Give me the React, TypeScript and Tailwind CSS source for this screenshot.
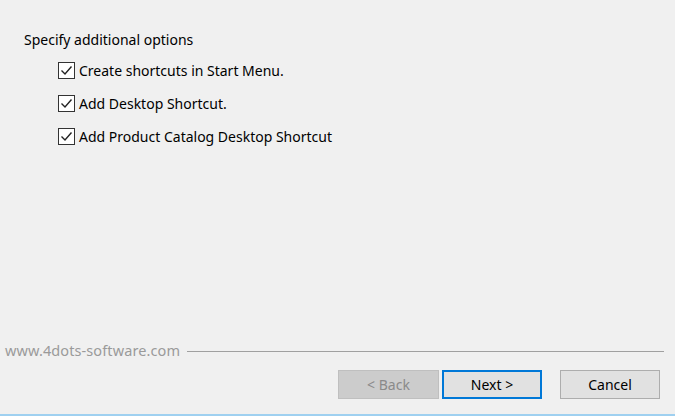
import React from "react";

const options = [
  "Create shortcuts in Start Menu.",
  "Add Desktop Shortcut.",
  "Add Product Catalog Desktop Shortcut",
];

const CheckBox = () => {
  return (
    <span className="w-[17px] h-[17px] border border-[#333333] bg-white flex items-center justify-center shrink-0">
      <svg width="13" height="13" viewBox="0 0 13 13">
        <path d="M1.5 6.5 L5 10 L11.5 2.5" fill="none" stroke="#222222" strokeWidth="1.4" />
      </svg>
    </span>
  );
};

const App = () => {
  return (
    <div
      className="w-[675px] h-[416px] bg-[#f0f0f0] flex flex-col text-black"
      style={{ fontFamily: '"Noto Sans", "Open Sans", sans-serif' }}
    >
      <div className="flex-1 pl-[24px] pt-[31px]">
        <div className="text-[14px] leading-[18px]">Specify additional options</div>
        <div className="pl-[34px] pt-[12px] flex flex-col gap-[15px]">
          {options.map((text, i) => {
            return (
              <label key={i} className="flex items-center gap-[4px] h-[18px] text-[14px]">
                <CheckBox />
                <span>{text}</span>
              </label>
            );
          })}
        </div>
      </div>
      <div className="flex items-center pl-[5px] pr-[11px] h-[18px]">
        <span className="text-[14.5px] text-[#9a9a9a] whitespace-nowrap tracking-[0.1px]">www.4dots-software.com</span>
        <div className="flex-1 ml-[7px] h-px bg-[#a0a0a0]" />
      </div>
      <div className="flex justify-end items-center pr-[15px] pt-[10px] pb-[15px]">
        <button className="w-[101px] h-[29px] bg-[#cccccc] border border-[#bfbfbf] text-[14px] text-[#8a8a8a] mr-[3px]">
          &lt; Back
        </button>
        <button className="w-[100px] h-[29px] bg-[#e1e1e1] border-2 border-[#0078d7] text-[14px] mr-[18px]">
          Next &gt;
        </button>
        <button className="w-[100px] h-[29px] bg-[#e1e1e1] border border-[#adadad] text-[14px]">
          Cancel
        </button>
      </div>
      <div className="h-[2px] bg-[#9fd0f0]" />
    </div>
  );
};

export default App;
